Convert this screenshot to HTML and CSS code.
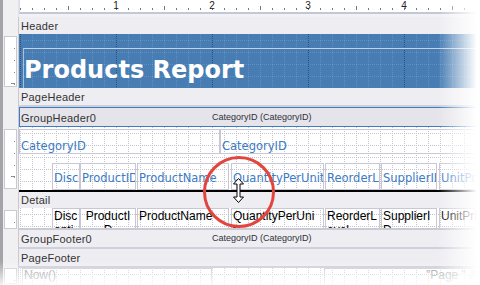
FILE: index.html
```html
<!DOCTYPE html>
<html lang="en">
<head>
    <meta charset="UTF-8">
    <meta name="viewport" content="width=device-width, initial-scale=1.0">
    <title>Products Report - Designer</title>
    <link rel="stylesheet" href="styles.css">
</head>
<body>
    <div class="designer">
        <!-- Top ruler -->
        <div class="row">
            <div class="gutter corner"></div>
            <div class="body ruler-wrap">
                <div class="ruler">
                    <span>1</span><span>2</span><span>3</span><span>4</span>
                </div>
            </div>
        </div>

        <!-- Header -->
        <div class="row">
            <div class="gutter"></div>
            <div class="body band-label"><span class="band-name">Header</span></div>
        </div>
        <div class="row">
            <div class="gutter"><div class="vruler"></div></div>
            <div class="body section report-header">
                <div class="title-box">Products Report</div>
            </div>
        </div>

        <!-- PageHeader -->
        <div class="row">
            <div class="gutter"></div>
            <div class="body band-label"><span class="band-name">PageHeader</span></div>
        </div>
        <div class="row">
            <div class="gutter"></div>
            <div class="body thin"></div>
        </div>

        <!-- GroupHeader0 -->
        <div class="row">
            <div class="gutter"></div>
            <div class="body band-label selected">
                <span class="band-name">GroupHeader0</span>
                <span class="group-field">CategoryID (CategoryID)</span>
            </div>
        </div>
        <div class="row">
            <div class="gutter"><div class="vruler"></div></div>
            <div class="body section grid group-header">
                <div class="field-row top-fields">
                    <div class="field label-field cat-main">CategoryID</div>
                    <div class="field label-field cat-side">CategoryID</div>
                </div>
                <div class="field-row col-fields">
                    <div class="field label-field c1">Discontinued</div>
                    <div class="field label-field c2">ProductID</div>
                    <div class="field label-field c3">ProductName</div>
                    <div class="field label-field c4">QuantityPerUnit</div>
                    <div class="field label-field c5">ReorderLevel</div>
                    <div class="field label-field c6">SupplierID</div>
                    <div class="field label-field c7">UnitPrice</div>
                </div>
            </div>
        </div>

        <!-- Detail -->
        <div class="row">
            <div class="gutter"></div>
            <div class="body band-label detail-label"><span class="band-name">Detail</span></div>
        </div>
        <div class="row">
            <div class="gutter"><div class="vruler"></div></div>
            <div class="body section grid detail">
                <div class="field-row">
                    <div class="field data-field c1">Discontinued</div>
                    <div class="field data-field c2">ProductID</div>
                    <div class="field data-field c3">ProductName</div>
                    <div class="field data-field c4">QuantityPerUnit</div>
                    <div class="field data-field c5">ReorderLevel</div>
                    <div class="field data-field c6">SupplierID</div>
                    <div class="field data-field c7">UnitPrice</div>
                </div>
            </div>
        </div>

        <!-- GroupFooter0 -->
        <div class="row">
            <div class="gutter"></div>
            <div class="body band-label">
                <span class="band-name">GroupFooter0</span>
                <span class="group-field">CategoryID (CategoryID)</span>
            </div>
        </div>
        <div class="row">
            <div class="gutter"></div>
            <div class="body thin"></div>
        </div>

        <!-- PageFooter -->
        <div class="row">
            <div class="gutter"></div>
            <div class="body band-label"><span class="band-name">PageFooter</span></div>
        </div>
        <div class="row">
            <div class="gutter"><div class="vruler"></div></div>
            <div class="body section grid page-footer">
                <div class="field-row">
                    <div class="field footer-field now">Now()</div>
                    <div class="field footer-field page-no">"Page " &amp; PageNumber</div>
                </div>
            </div>
        </div>

        <!-- Drag highlight -->
        <svg class="drag-circle" width="72" height="72" viewBox="0 0 72 72">
            <circle cx="36" cy="36" r="34.5" fill="none" stroke="#e2443e" stroke-width="3"/>
        </svg>
        <svg class="resize-cursor" width="11" height="25" viewBox="0 0 11 25">
            <polygon points="5.5,0.5 10.5,6 7,6 7,19 10.5,19 5.5,24.5 0.5,19 4,19 4,6 0.5,6"
                     fill="#fff" stroke="#000" stroke-width="1" stroke-linejoin="miter"/>
        </svg>

        <div class="fade-right"></div>
        <div class="fade-bottom"></div>
    </div>
</body>
</html>
```

FILE: styles.css
```css
body {
    margin: 0;
    background-color: #fff;
    font-family: "Liberation Sans", Arial, sans-serif;
}
.designer {
    position: relative;
    width: 480px;
    height: 285px;
    box-sizing: border-box;
    padding-left: 3px;
    overflow: hidden;
    background: linear-gradient(to right, #a4a4a8 3px, #f0f0f3 3px);
}
.row {
    display: flex;
}
.gutter {
    width: 16px;
    flex-shrink: 0;
    box-sizing: border-box;
    border-right: 1px solid #c9c9d2;
    background-color: #f0f0f3;
    display: flex;
    flex-direction: column;
}
.gutter.corner {
    border-right-color: #e2e2e8;
}
.body {
    flex: 1;
    min-width: 0;
}

/* Rulers */
.ruler-wrap {
    padding-bottom: 3px;
    background-color: #f2f2f6;
}
.ruler {
    height: 12px;
    display: flex;
    padding-left: 48px;
    border-left: 1px solid #dcdce4;
    border-bottom: 2px solid #c3c6d5;
    background-color: #fff;
    background-image:
        linear-gradient(to right, #75757c 1px, transparent 1px),
        linear-gradient(to right, #75757c 1px, transparent 1px);
    background-size: 12px 2px, 96px 4px;
    background-position: 0 8px, 48px 6px;
    background-repeat: repeat-x;
}
.ruler span {
    width: 96px;
    flex-shrink: 0;
    text-align: center;
    font-size: 10px;
    line-height: 10px;
    padding-top: 1px;
    color: #222;
}
.vruler {
    flex: 1;
    margin: 2px 1px 1px 1px;
    border: 1px solid #c9c9d1;
    background-color: #fff;
    background-image:
        linear-gradient(to bottom, #8a8a90 1px, transparent 1px),
        linear-gradient(#8a8a90, #8a8a90);
    background-size: 1px 12px, 4px 1px;
    background-position: 9px 11px, 6px 46px;
    background-repeat: repeat-y, no-repeat;
}

/* Band labels */
.band-label {
    display: flex;
    height: 17px;
    box-sizing: border-box;
    padding: 1px 0 0 2px;
    background-color: #eeedf2;
    color: #333;
    font-size: 11px;
    letter-spacing: 0.2px;
    white-space: nowrap;
}
.band-name {
    width: 191px;
    flex-shrink: 0;
    line-height: 16px;
}
.group-field {
    font-size: 9px;
    line-height: 15px;
    letter-spacing: 0;
    color: #30303a;
}
.band-label.selected {
    height: 20px;
    padding: 2px 0 0 1px;
    border: 1px solid #3d7cc1;
    border-right: 0;
    background-color: #e4e4ea;
}
.band-label.detail-label {
    height: 18px;
    padding-top: 0;
    border-top: 2px solid #000;
}
.thin {
    height: 2px;
    background-color: #cfd0d9;
}

/* Sections */
.section {
    overflow: hidden;
}
.grid {
    background-color: #fff;
    background-image:
        conic-gradient(from 90deg at 1px 1px, transparent 50%, #c4c4cc 0 75%, transparent 0),
        conic-gradient(from 90deg at 1px 1px, transparent 50%, #c4c4cc 0 75%, transparent 0);
    background-size: 2px 12px, 12px 2px;
    background-position: 1px 6px, 1px 0;
}
.report-header {
    height: 54px;
    background-color: #477db3;
    background-image:
        conic-gradient(from 90deg at 1px 1px, transparent 50%, #2c527c 0 75%, transparent 0),
        conic-gradient(from 90deg at 1px 1px, transparent 50%, rgba(255, 255, 255, 0.14) 0 75%, transparent 0),
        conic-gradient(from 90deg at 1px 1px, transparent 50%, rgba(255, 255, 255, 0.14) 0 75%, transparent 0);
    background-size: 96px 2px, 2px 12px, 12px 2px;
    background-position: 1px 0, 1px 6px, 1px 0;
}
.title-box {
    margin: 14px 0 0 4px;
    height: 60px;
    padding-top: 7px;
    border-top: 1px solid #c3d3e5;
    border-left: 1px solid #a8c0da;
    color: #fff;
    font-family: "DejaVu Sans", Verdana, sans-serif;
    font-weight: bold;
    font-size: 24px;
    line-height: 28px;
    white-space: nowrap;
}
.group-header {
    height: 63px;
}
.detail {
    height: 20px;
    border-bottom: 2px solid #c9cad4;
}
.page-footer {
    height: 17px;
    border-top: 2px solid #c9cad4;
}

/* Fields */
.field-row {
    display: flex;
}
.field {
    box-sizing: border-box;
    flex-shrink: 0;
    border: 1px solid #c7c7d5;
    overflow: hidden;
}
.label-field {
    padding-left: 1px;
    color: #3b7bc4;
    font-family: "DejaVu Sans", Verdana, sans-serif;
    font-size: 11.5px;
    line-height: 13px;
    white-space: nowrap;
}
.top-fields {
    margin-top: 2px;
}
.top-fields .field {
    height: 25px;
    padding-top: 10px;
}
.cat-main {
    width: 201px;
}
.cat-side {
    flex: 1;
    flex-shrink: 1;
}
.col-fields {
    margin-top: 9px;
}
.col-fields .field {
    height: 27px;
    padding-top: 8px;
}
.col-fields .c4 {
    padding-right: 3px;
}
.c1 { margin-left: 33px; width: 28px; }
.c2 { width: 56px; }
.c3 { margin-left: 1px; width: 92px; }
.c4 { margin-left: 2px; width: 93px; }
.c5 { margin-left: 1px; width: 55px; }
.c6 { margin-left: 1px; width: 56px; }
.c7 { margin-left: 2px; width: 56px; }

.data-field {
    height: 22px;
    padding: 0 0 0 1px;
    color: #000;
    font-size: 12px;
    line-height: 14px;
    word-break: break-all;
}
.data-field.c2 {
    padding: 0 4px;
    text-align: center;
}
.data-field.c4 {
    padding-right: 7px;
}
.footer-field {
    height: 20px;
    padding-left: 1px;
    color: #8e8e8e;
    font-size: 12px;
    line-height: 13px;
    white-space: nowrap;
}
.now {
    margin-left: 3px;
    width: 190px;
}
.page-no {
    margin-left: 112px;
    width: 200px;
    padding-left: 101px;
}

/* Overlays */
.drag-circle {
    position: absolute;
    left: 203px;
    top: 156px;
}
.resize-cursor {
    position: absolute;
    left: 233px;
    top: 178px;
}
.fade-right {
    position: absolute;
    top: 0;
    right: 0;
    width: 42px;
    height: 100%;
    background: linear-gradient(to right, rgba(255, 255, 255, 0), #fff 92%);
}
.fade-bottom {
    position: absolute;
    left: 0;
    right: 0;
    bottom: 0;
    height: 24px;
    background: linear-gradient(rgba(255, 255, 255, 0), rgba(255, 255, 255, 0.88));
}
```
